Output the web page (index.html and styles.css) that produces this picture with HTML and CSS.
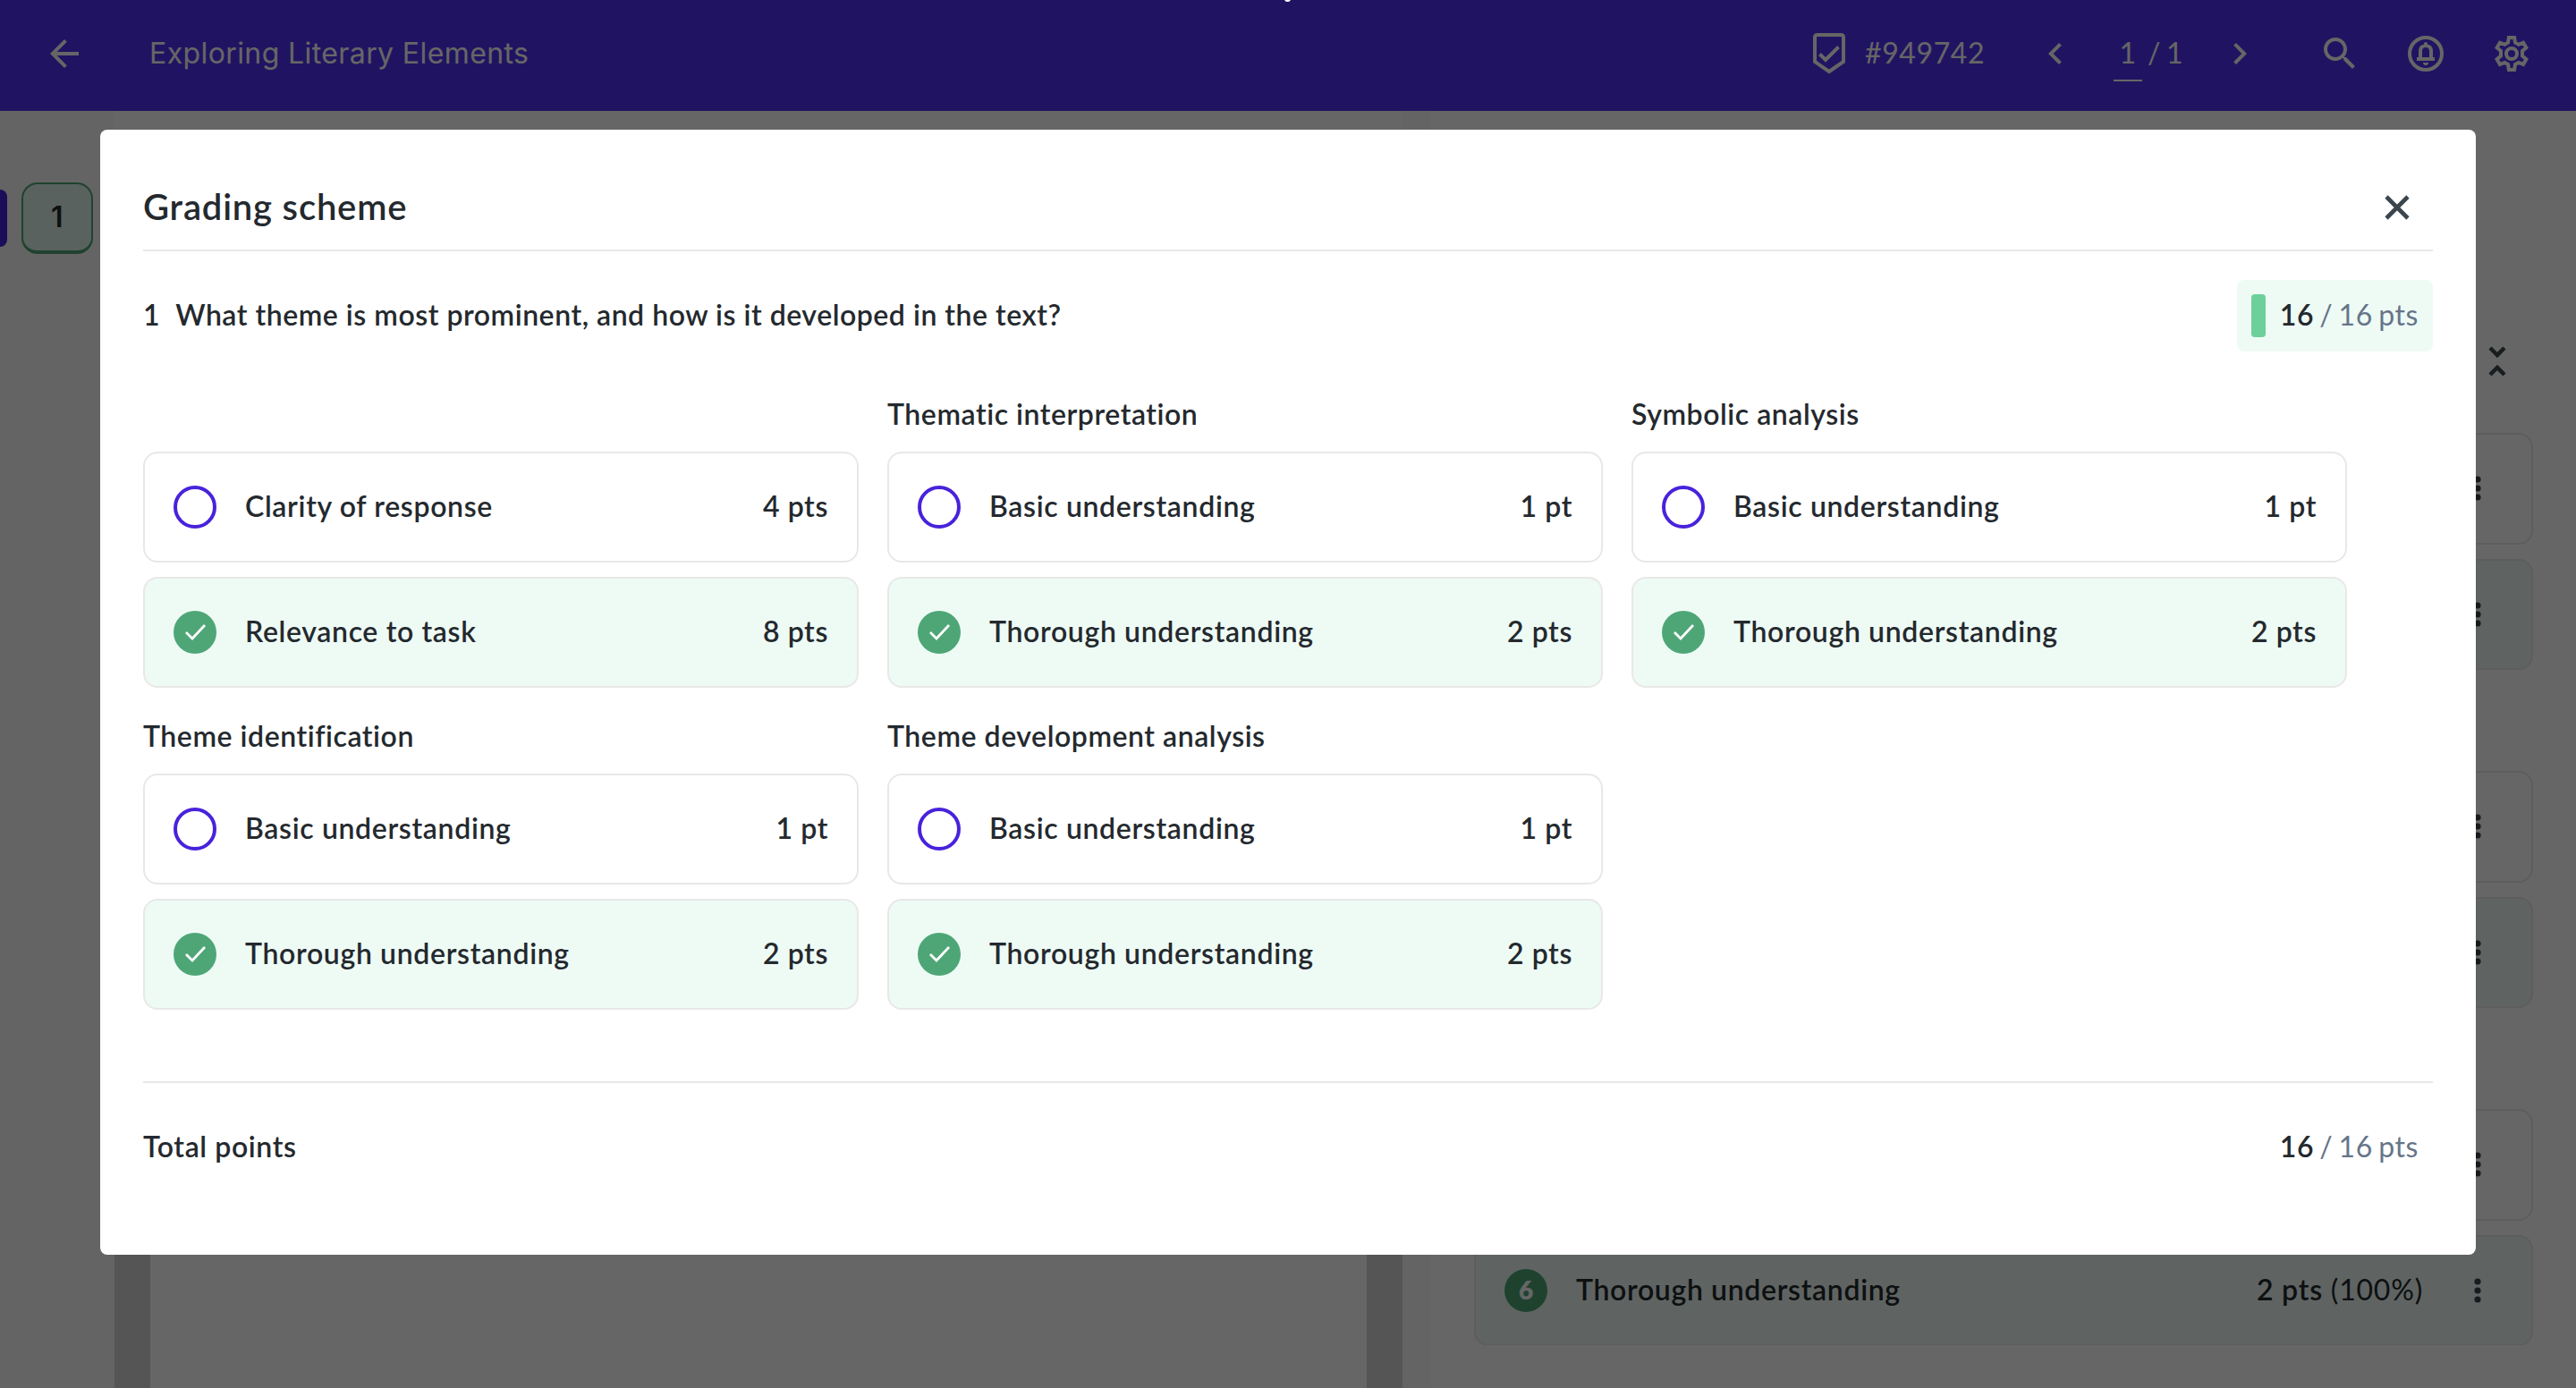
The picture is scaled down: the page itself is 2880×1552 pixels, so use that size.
FILE: index.html
```html
<!DOCTYPE html>
<html lang="en">
<head>
    <meta charset="UTF-8">
    <title>Grading scheme</title>
    <link rel="stylesheet" href="styles.css">
</head>
<body>
<!-- shared icons -->
<svg class="sprite">
    <symbol id="check" viewBox="0 0 48 48"><path d="M14 24l7 7 14-15" fill="none" stroke="#fff" stroke-width="2.8"/></symbol>
    <symbol id="dots" viewBox="0 0 8 30"><circle cx="4" cy="5" r="3.6"/><circle cx="4" cy="15" r="3.6"/><circle cx="4" cy="25" r="3.6"/></symbol>
</svg>

<div class="app">
    <header class="topbar">
        <svg class="icon" viewBox="0 0 24 24"><path d="M20 11H7.83l5.59-5.59L12 4l-8 8 8 8 1.41-1.41L7.83 13H20v-2z"/></svg>
        <h1>Exploring Literary Elements</h1>
        <div class="student">
            <svg class="icon" viewBox="0 0 48 48"><path d="M11 4h26c2 0 3 1 3 3v27L24 45 8 34V7c0-2 1-3 3-3z" transform="translate(0 -1)" fill="none" stroke="currentColor" stroke-width="4"/><path d="M13.500 24.500l6.500 6.500 14.500-14.500" fill="none" stroke="currentColor" stroke-width="4"/></svg>
            <span>#949742</span>
        </div>
        <div class="pager">
            <svg class="icon" viewBox="0 0 24 24"><path d="M15.410 7.410L14 6l-6 6 6 6 1.410-1.410L10.830 12z"/></svg>
            <span class="page-input">1</span>
            <span class="slash">/</span>
            <span>1</span>
            <svg class="icon next" viewBox="0 0 24 24"><path d="M10 6L8.590 7.410 13.170 12l-4.580 4.590L10 18l6-6z"/></svg>
        </div>
        <div class="tools">
            <svg class="icon" viewBox="0 0 24 24"><path d="M15.500 14h-.79l-.28-.27C15.410 12.590 16 11.110 16 9.500 16 5.910 13.090 3 9.500 3S3 5.910 3 9.500 5.910 16 9.500 16c1.610 0 3.090-.59 4.230-1.570l.27.28v.79l5 4.990L20.490 19l-4.990-5zm-6 0C7.010 14 5 11.990 5 9.500S7.010 5 9.500 5 14 7.010 14 9.500 11.990 14 9.500 14z"/></svg>
            <svg class="icon" viewBox="0 0 48 48"><circle cx="24" cy="24" r="18" fill="none" stroke="currentColor" stroke-width="4"/><path d="M14 28h2v-7c0-4 2-6.500 6-7.200V13a2 2 0 0 1 4 0v.8c4 .7 6 3.200 6 7.200v7h2v4H14zM20 28h8v-7c0-2.600-1.500-4-4-4s-4 1.400-4 4zM21 34h6a3 3 0 0 1-6 0z" fill-rule="evenodd"/></svg>
            <svg class="icon" viewBox="0 0 48 48"><path d="M20.900 6h6.200l.9 5.600 3.800 2.200 5.300-2.100 3.300 5.600-4.400 3.700v5.500l4.400 3.800-3.300 5.700-5.300-2.100-3.800 2.200-.9 5.900h-6.200l-.9-5.900-3.800-2.200-5.300 2.100-3.300-5.700 4.400-3.800V21l-4.400-3.700 3.300-5.600 5.300 2.100 3.800-2.200z" fill="none" stroke="currentColor" stroke-width="4"/><circle cx="24" cy="24" r="6" fill="none" stroke="currentColor" stroke-width="4"/></svg>
        </div>
    </header>

    <div class="workspace">
        <nav class="questions">
            <span class="marker"></span>
            <span class="tile">1</span>
        </nav>
        <div class="document">
            <div class="toolbar"></div>
            <div class="canvas"><div class="paper"></div></div>
        </div>
        <div class="gutter"></div>
        <aside class="rubric">
            <svg class="collapse" viewBox="0 0 20 36"><path d="M2 3l8 8 8-8M2 33l8-8 8 8" fill="none" stroke="currentColor" stroke-width="4.500"/></svg>
            <div class="rubric-group">
                <div class="row"><svg class="menu"><use href="#dots"/></svg></div>
                <div class="row done"><svg class="menu"><use href="#dots"/></svg></div>
            </div>
            <div class="rubric-group">
                <div class="row"><svg class="menu"><use href="#dots"/></svg></div>
                <div class="row done"><svg class="menu"><use href="#dots"/></svg></div>
            </div>
            <div class="rubric-group last">
                <div class="row"><svg class="menu"><use href="#dots"/></svg></div>
                <div class="row done">
                    <span class="key">6</span>
                    <span class="name">Thorough understanding</span>
                    <span class="score">2 pts <small>(100%)</small></span>
                    <svg class="menu"><use href="#dots"/></svg>
                </div>
            </div>
        </aside>
    </div>
</div>

<div class="overlay">
    <span class="notch"></span>
    <div class="modal">
        <div class="modal-head">
            <h2>Grading scheme</h2>
            <svg class="close" viewBox="0 0 28 28"><path d="M2 2l24 24M26 2L2 26" fill="none" stroke="currentColor" stroke-width="4.600"/></svg>
        </div>

        <div class="question">
            <span class="number">1</span>
            <span class="prompt">What theme is most prominent, and how is it developed in the text?</span>
            <span class="badge"><i class="bar"></i><span class="points"><b>16</b> / 16 pts</span></span>
        </div>

        <div class="groups">
            <section class="group">
                <h3></h3>
                <div class="card"><i class="radio"></i><span class="name">Clarity of response</span><span>4 pts</span></div>
                <div class="card done"><svg class="radio"><use href="#check"/></svg><span class="name">Relevance to task</span><span>8 pts</span></div>
            </section>
            <section class="group">
                <h3>Thematic interpretation</h3>
                <div class="card"><i class="radio"></i><span class="name">Basic understanding</span><span>1 pt</span></div>
                <div class="card done"><svg class="radio"><use href="#check"/></svg><span class="name">Thorough understanding</span><span>2 pts</span></div>
            </section>
            <section class="group">
                <h3>Symbolic analysis</h3>
                <div class="card"><i class="radio"></i><span class="name">Basic understanding</span><span>1 pt</span></div>
                <div class="card done"><svg class="radio"><use href="#check"/></svg><span class="name">Thorough understanding</span><span>2 pts</span></div>
            </section>
            <section class="group">
                <h3>Theme identification</h3>
                <div class="card"><i class="radio"></i><span class="name">Basic understanding</span><span>1 pt</span></div>
                <div class="card done"><svg class="radio"><use href="#check"/></svg><span class="name">Thorough understanding</span><span>2 pts</span></div>
            </section>
            <section class="group">
                <h3>Theme development analysis</h3>
                <div class="card"><i class="radio"></i><span class="name">Basic understanding</span><span>1 pt</span></div>
                <div class="card done"><svg class="radio"><use href="#check"/></svg><span class="name">Thorough understanding</span><span>2 pts</span></div>
            </section>
        </div>

        <div class="total">
            <span>Total points</span>
            <span class="points"><b>16</b> / 16 pts</span>
        </div>
    </div>
</div>
</body>
</html>
```

FILE: styles.css
```css
* {
    margin: 0;
    padding: 0;
    box-sizing: border-box;
}

body {
    width: 2880px;
    height: 1552px;
    overflow: hidden;
    font-family: Lato, "Liberation Sans", sans-serif;
    font-size: 32px;
    font-weight: 600;
    line-height: 48px;
    letter-spacing: 0.6px;
    color: #24292e;
}

.sprite {
    position: absolute;
    width: 0;
    height: 0;
}

.app {
    height: 1552px;
    display: flex;
    flex-direction: column;
}

/* top bar */
.topbar {
    height: 124px;
    flex-shrink: 0;
    display: flex;
    align-items: center;
    padding: 0 48px 4px;
    background: #5232f6;
    color: #fff;
    font-weight: 400;
}

.icon {
    width: 48px;
    height: 48px;
    flex-shrink: 0;
    fill: currentColor;
}

.topbar h1 {
    margin-left: 71px;
    margin-right: auto;
    font-family: Inter, sans-serif;
    font-size: 32px;
    font-weight: 400;
    letter-spacing: 0.4px;
    white-space: nowrap;
}

.student {
    width: 253px;
    display: flex;
    align-items: center;
    gap: 16px;
}

.student span {
    padding-bottom: 2px;
}

.pager {
    width: 254px;
    display: flex;
    align-items: center;
}

.pager span {
    height: 62px;
    padding-top: 6px;
}

.pager .page-input {
    width: 32px;
    margin-left: 41px;
    border-bottom: 2px solid #fff;
    text-align: center;
}

.slash {
    margin: 0 6px 0 6px;
}

.pager .next {
    margin-left: auto;
}

.tools {
    display: flex;
    gap: 48px;
    margin-left: 64px;
}

/* page behind the dialog */
.workspace {
    flex: 1;
    display: flex;
    background: #fff;
}

.questions {
    width: 128px;
    height: 100%;
    padding-top: 80px;
    display: flex;
    align-items: flex-start;
    gap: 16px;
    background: #f9f9f9;
}

.marker {
    width: 8px;
    height: 64px;
    margin-top: 8px;
    border-radius: 0 8px 8px 0;
    background: #4822dc;
}

.tile {
    width: 80px;
    height: 80px;
    border: 2px solid #4ea677;
    border-bottom-width: 4px;
    border-radius: 18px;
    background: #dff6ea;
    font-family: Inter, sans-serif;
    text-align: center;
    line-height: 74px;
}

.document {
    width: 1440px;
    display: flex;
    flex-direction: column;
}

.toolbar {
    height: 60px;
}

.canvas {
    flex: 1;
    padding: 0 40px;
    background: #d5d5d5;
}

.paper {
    height: 100%;
    background: #fff;
}

.gutter {
    width: 32px;
    background: #f9f9f9;
}

.rubric {
    flex: 1;
    padding: 262px 48px 0;
    display: flex;
    flex-direction: column;
}

.collapse {
    width: 20px;
    height: 36px;
    margin-left: auto;
    margin-right: 30px;
    margin-bottom: 62px;
    color: #3e4a52;
}

.rubric-group {
    display: flex;
    flex-direction: column;
    gap: 16px;
    margin-bottom: 113px;
}

.rubric-group.last {
    height: 264px;
    overflow: hidden;
}

.row {
    height: 124.500px;
    flex-shrink: 0;
    display: flex;
    align-items: center;
    padding: 0 56px 0 32px;
    border: 2px solid #e8e8e8;
    border-radius: 16px;
}

.row .menu {
    width: 8px;
    height: 30px;
    margin-left: auto;
    fill: #3a444c;
}

.row .score + .menu {
    margin-left: 57px;
}

.key {
    width: 48px;
    height: 48px;
    margin-right: 32px;
    border-radius: 50%;
    background: #4ea677;
    color: #fff;
    font-size: 28px;
    font-weight: 800;
    text-align: center;
    line-height: 46px;
    letter-spacing: 0;
}

.score {
    padding-bottom: 2px;
    letter-spacing: 0.8px;
}

.score small {
    font-size: 32px;
    font-weight: 400;
}

.done {
    background: #eefbf5;
}

.name {
    margin-right: auto;
    padding-bottom: 2px;
    letter-spacing: 0.66px;
}

/* dialog */
.overlay {
    position: fixed;
    inset: 0;
    padding: 145px 112px;
    background: rgba(0, 0, 0, .6);
}

.notch {
    position: absolute;
    top: -5px;
    left: 1436px;
    width: 7px;
    height: 7px;
    border-radius: 50%;
    background: #fff;
}

.modal {
    height: 1258px;
    padding: 38px 48px 0;
    border-radius: 8px;
    background: #fff;
}

.modal-head {
    height: 98px;
    display: flex;
    align-items: center;
    justify-content: space-between;
    border-bottom: 2px solid #e8e8e8;
}

.modal-head h2 {
    font-size: 40px;
    font-weight: 600;
    letter-spacing: 0.8px;
}

.close {
    width: 28px;
    height: 28px;
    margin-right: 26px;
    margin-top: 1px;
    color: #3b454d;
}

.question {
    height: 80px;
    margin-top: 32px;
    display: flex;
    align-items: center;
}

.number {
    padding-bottom: 2px;
}

.prompt {
    margin-left: 17px;
    margin-right: auto;
    padding-bottom: 2px;
    letter-spacing: 0.53px;
}

.badge {
    width: 219px;
    height: 80px;
    padding: 0 16px;
    display: flex;
    align-items: center;
    justify-content: space-between;
    border-radius: 8px;
    background: #eefbf5;
}

.bar {
    width: 16px;
    height: 48px;
    border-radius: 4px;
    background: #6bd09a;
}

.points {
    padding-bottom: 2px;
    font-weight: 400;
    letter-spacing: 0.6px;
    word-spacing: -2.600px;
    color: #66758a;
}

.points b {
    font-weight: 600;
    color: #24292e;
}

.groups {
    display: grid;
    grid-template-columns: repeat(3, 800px);
    column-gap: 32px;
    margin-top: 30px;
}

.group {
    height: 360px;
    padding-top: 16px;
    display: flex;
    flex-direction: column;
    gap: 16px;
}

.group h3 {
    height: 50px;
    font-size: 32px;
    font-weight: 600;
    letter-spacing: 0.55px;
}

.card {
    height: 124px;
    flex-shrink: 0;
    display: flex;
    align-items: center;
    padding: 0 32px;
    border: 2px solid #e8e8e8;
    border-radius: 16px;
}

.card span {
    padding-bottom: 2px;
}

.radio {
    width: 48px;
    height: 48px;
    margin-right: 32px;
    border: 4px solid #4822dc;
    border-radius: 50%;
}

.done .radio {
    border: 0;
    background: #4ea677;
}

.total {
    height: 146px;
    margin-top: 66px;
    padding-right: 16px;
    display: flex;
    align-items: center;
    justify-content: space-between;
    border-top: 2px solid #e8e8e8;
}

.total span {
    padding-bottom: 2px;
}
```
